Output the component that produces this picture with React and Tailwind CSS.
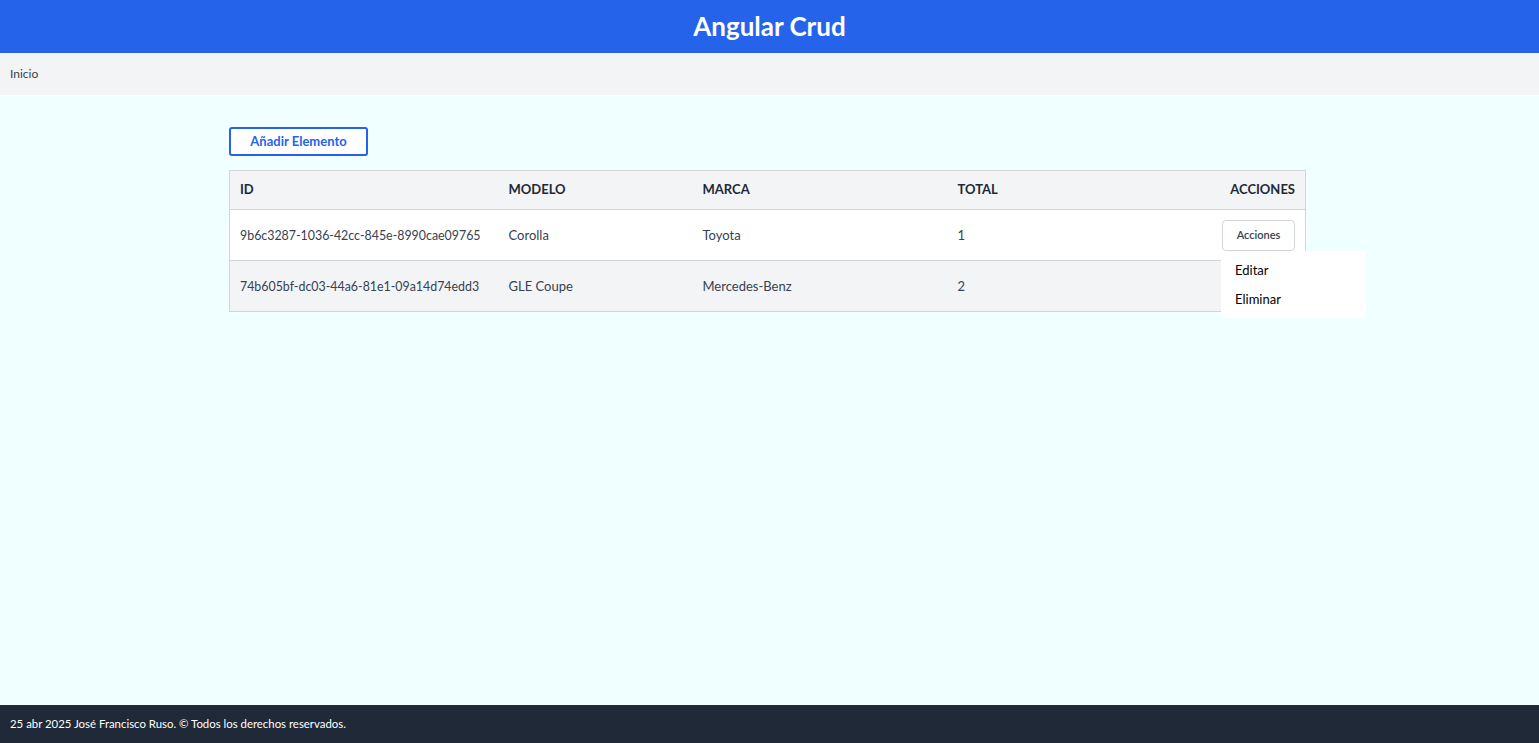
import React from 'react';

const rows = [
  { id: '9b6c3287-1036-42cc-845e-8990cae09765', modelo: 'Corolla', marca: 'Toyota', total: 1 },
  { id: '74b605bf-dc03-44a6-81e1-09a14d74edd3', modelo: 'GLE Coupe', marca: 'Mercedes-Benz', total: 2 },
];

const App = () => {
  return (
    <div
      className="min-h-screen flex flex-col bg-[#f0ffff]"
      style={{ fontFamily: 'Lato, "Noto Sans", sans-serif' }}
    >
      <header className="h-[53px] bg-[#2563eb] flex items-center justify-center">
        <h1 className="text-white text-[26px] font-bold">Angular Crud</h1>
      </header>

      <nav className="h-[42px] bg-[#f3f4f6] flex items-center px-[10px]">
        <span className="text-[12px] text-[#374151]">Inicio</span>
      </nav>

      <main className="flex-1 pt-[32px]">
        <div className="w-[1077px] ml-[229px]">
          <button className="h-[29px] w-[139px] border-2 border-[#2563eb] rounded-[3px] text-[#2563eb] text-[13px] font-bold bg-white">
            Añadir Elemento
          </button>

          <table className="mt-[14px] w-full table-fixed border border-[#d1d5db] text-[13px] border-collapse whitespace-nowrap">
            <thead>
              <tr className="bg-[#f3f4f6] h-[39px] border-b border-[#d1d5db]">
                <th className="text-left font-bold text-[#1f2937] px-[10px] w-[269px]">ID</th>
                <th className="text-left font-bold text-[#1f2937] px-[10px] w-[194px]">MODELO</th>
                <th className="text-left font-bold text-[#1f2937] px-[10px] w-[255px]">MARCA</th>
                <th className="text-left font-bold text-[#1f2937] px-[10px]">TOTAL</th>
                <th className="text-right font-bold text-[#1f2937] px-[10px] w-[160px]">ACCIONES</th>
              </tr>
            </thead>
            <tbody>
              {rows.map((row, i) => (
                <tr
                  key={row.id}
                  className={`h-[51px] ${i === 0 ? 'bg-white border-b border-[#d1d5db]' : 'bg-[#f3f4f6]'}`}
                >
                  <td className="px-[10px] text-[#374151] text-[12.4px] pt-[2px]">{row.id}</td>
                  <td className="px-[10px] text-[#374151] pt-[2px]">{row.modelo}</td>
                  <td className="px-[10px] text-[#374151] pt-[2px]">{row.marca}</td>
                  <td className="px-[10px] text-[#374151] pt-[2px]">{row.total}</td>
                  <td className="px-[10px] text-right">
                    {i === 0 && (
                      <div className="relative inline-block align-middle">
                        <button className="h-[31px] w-[73px] border border-[#d1d5db] rounded-[4px] bg-white text-[11px] font-semibold text-[#374151]">
                          Acciones
                        </button>
                        <div className="absolute left-[-1px] top-[31px] w-[145px] bg-white pt-[6px] pb-[3px] text-left z-10">
                          <div className="px-[14px] h-[29px] flex items-center text-[13px] text-black">Editar</div>
                          <div className="px-[14px] h-[29px] flex items-center text-[13px] text-black">Eliminar</div>
                        </div>
                      </div>
                    )}
                  </td>
                </tr>
              ))}
            </tbody>
          </table>
        </div>
      </main>

      <footer className="h-[38px] bg-[#1f2937] flex items-center px-[10px]">
        <span className="text-white text-[11.4px]">25 abr 2025 José Francisco Ruso. © Todos los derechos reservados.</span>
      </footer>
    </div>
  );
};

export default App;
